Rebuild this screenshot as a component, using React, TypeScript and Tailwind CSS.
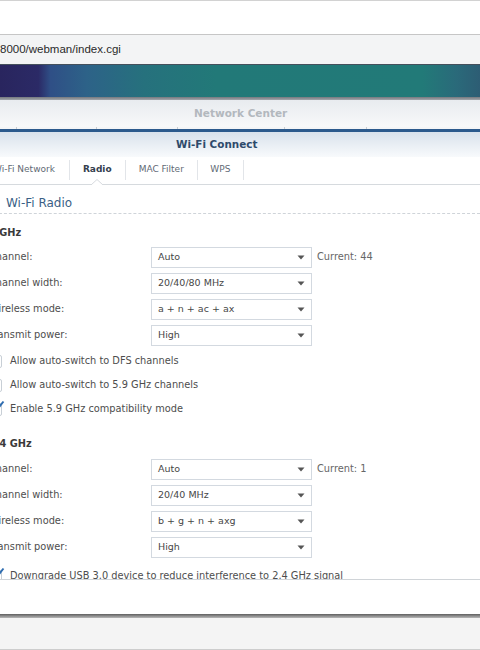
import React from 'react';

type Row = { label: string; value: string; current?: string };

const rows5: Row[] = [
  { label: 'Channel:', value: 'Auto', current: 'Current: 44' },
  { label: 'Channel width:', value: '20/40/80 MHz' },
  { label: 'Wireless mode:', value: 'a + n + ac + ax' },
  { label: 'Transmit power:', value: 'High' },
];

const rows24: Row[] = [
  { label: 'Channel:', value: 'Auto', current: 'Current: 1' },
  { label: 'Channel width:', value: '20/40 MHz' },
  { label: 'Wireless mode:', value: 'b + g + n + axg' },
  { label: 'Transmit power:', value: 'High' },
];

const SelectRow: React.FC<{ row: Row; first?: boolean }> = ({ row, first }) => (
  <div className={`flex items-center h-[21px] ${first ? '' : 'mt-[5px]'}`}>
    <span className="w-[162px] shrink-0 text-[9.8px] text-[#4d4d4d] whitespace-nowrap">{row.label}</span>
    <div className="w-[161px] h-[21px] shrink-0 flex items-center justify-between border border-[#d3d9e0] bg-white pl-[6px] pr-[6px]">
      <span className="text-[9.5px] text-[#474747] whitespace-nowrap">{row.value}</span>
      <svg width="8" height="5" viewBox="0 0 8 5">
        <path d="M0.5 0.5 H7.5 L4 4.5 Z" fill="#555" />
      </svg>
    </div>
    {row.current && (
      <span className="ml-[5px] text-[9.8px] text-[#666] whitespace-nowrap">{row.current}</span>
    )}
  </div>
);

const Check: React.FC<{ label: string; checked?: boolean }> = ({ label, checked }) => (
  <div className="flex items-center h-[24px]">
    <span className="relative w-[13px] h-[13px] shrink-0 border border-[#c8cfd6] rounded-[2px] bg-white">
      {checked && (
        <svg className="absolute -top-[4px] -left-[1px]" width="17" height="15" viewBox="0 0 17 15">
          <path d="M3 8 L6.5 11.5 L14.5 1.5" stroke="#2f6db0" strokeWidth="2" fill="none" />
        </svg>
      )}
    </span>
    <span className="ml-[8px] text-[9.8px] text-[#4d4d4d] whitespace-nowrap">{label}</span>
  </div>
);

export default function App() {
  return (
    <div className="w-[480px] h-[650px] overflow-hidden bg-white font-['DejaVu_Sans',Verdana,sans-serif]">
      {/* browser chrome */}
      <div className="h-[35px] bg-white border-t border-[#d2d2d2] border-b border-b-[#c6c6c6]" />
      <div className="h-[29px] bg-[#f3f4f5] flex items-center">
        <span className="text-[11.5px] text-[#2a2a2a] font-['Liberation_Sans',Arial,sans-serif] whitespace-nowrap">8000/webman/index.cgi</span>
      </div>
      <div className="h-[33px] border-t border-[#45505c] bg-[linear-gradient(to_right,#29255e_0%,#2b2a66_8%,#2f4f86_10.5%,#2d6288_18%,#26717d_30%,#227978_45%,#227a78_88%,#2a6a7a_95%,#2d5d74_100%)]" />
      <div className="h-[3px] bg-[linear-gradient(to_bottom,#74787e,#a3a7ac)]" />

      {/* Network Center window title */}
      <div className="h-[27px] flex items-center bg-[linear-gradient(to_bottom,#e8ebef,#f8f9fa)]">
        <span className="pl-[194px] text-[10.5px] font-bold text-[#b3b8be] whitespace-nowrap">Network Center</span>
      </div>
      <div className="h-[2px] flex bg-[#f4f5f7]">
        <div className="w-[17px] border-r border-[#c9cdd2]" />
        <div className="w-[80px] border-r border-[#c9cdd2]" />
        <div className="w-[81px] border-r border-[#c9cdd2]" />
        <div className="w-[107px] border-r border-[#c9cdd2]" />
        <div className="w-[82px] border-r border-[#c9cdd2]" />
      </div>

      {/* Wi-Fi Connect dialog */}
      <div className="-ml-[21px] w-[501px]">
        <div className="h-[3px] bg-[#2c5a8d]" />
        <div className="h-[25px] flex items-center bg-[linear-gradient(to_bottom,#d9e2ec,#f8fafc)]">
          <span className="pl-[197px] text-[10.4px] font-bold text-[#2e4a6b] whitespace-nowrap">Wi-Fi Connect</span>
        </div>

        {/* tabs */}
        <div className="h-[28px] flex items-stretch bg-white border-b border-[#d6dade]">
          <div className="px-[14px] flex items-center pb-[2px] text-[9px] text-[#5f6a75] whitespace-nowrap">Wi-Fi Network</div>
          <div className="w-px h-[20px] self-center bg-[#e2e5e9] mb-[2px]" />
          <div className="relative px-[13px] flex items-center pb-[2px] text-[9px] font-bold text-[#34404e] whitespace-nowrap">
            Radio
            <svg className="absolute -bottom-[1px] left-1/2 -translate-x-1/2" width="12" height="6" viewBox="0 0 12 6">
              <path d="M0 6 L6 0.5 L12 6 Z" fill="#fff" />
              <path d="M0 6 L6 0.5 L12 6" stroke="#d6dade" strokeWidth="1" fill="none" />
            </svg>
          </div>
          <div className="w-px h-[20px] self-center bg-[#e2e5e9] mb-[2px]" />
          <div className="px-[13px] flex items-center pb-[2px] text-[9px] text-[#5f6a75] whitespace-nowrap">MAC Filter</div>
          <div className="w-px h-[20px] self-center bg-[#e2e5e9] mb-[2px]" />
          <div className="px-[12.5px] flex items-center pb-[2px] text-[9px] text-[#5f6a75] whitespace-nowrap">WPS</div>
          <div className="w-px h-[20px] self-center bg-[#e2e5e9] mb-[2px]" />
        </div>

        {/* scrolling content */}
        <div className="h-[394px] overflow-hidden bg-white pl-[10px]">
          <div className="mt-[8px] h-[21px] flex items-center border-b border-dashed border-[#cfd4d9] pl-[17px]">
            <span className="text-[12px] text-[#3b5f86] whitespace-nowrap">Wi-Fi Radio</span>
          </div>

          <div className="mt-[11px] h-[16px] flex items-center text-[9.8px] font-bold text-[#3a3a3a]">5 GHz</div>
          <div className="mt-[6px]">
            {rows5.map((r, i) => (
              <SelectRow key={r.label} row={r} first={i === 0} />
            ))}
          </div>
          <div className="mt-[3px]">
            <Check label="Allow auto-switch to DFS channels" />
            <Check label="Allow auto-switch to 5.9 GHz channels" />
            <Check label="Enable 5.9 GHz compatibility mode" checked />
          </div>

          <div className="mt-[15px] h-[16px] flex items-center text-[9.8px] font-bold text-[#3a3a3a]">2.4 GHz</div>
          <div className="mt-[7px]">
            {rows24.map((r, i) => (
              <SelectRow key={r.label} row={r} first={i === 0} />
            ))}
          </div>
          <div className="mt-[6px]">
            <Check label="Downgrade USB 3.0 device to reduce interference to 2.4 GHz signal" checked />
          </div>
        </div>

        {/* dialog footer */}
        <div className="h-[35px] bg-white border-t border-[#d0d4d8]" />
      </div>

      <div className="h-[4px] bg-[linear-gradient(to_bottom,#5e5e5e,#b8b8b8)]" />
      <div className="h-[31px] bg-[#f4f4f4]" />
      <div className="h-[2px] bg-[#cdcdcd]" />
      <div className="h-[2px] bg-[#ececec]" />
    </div>
  );
}
